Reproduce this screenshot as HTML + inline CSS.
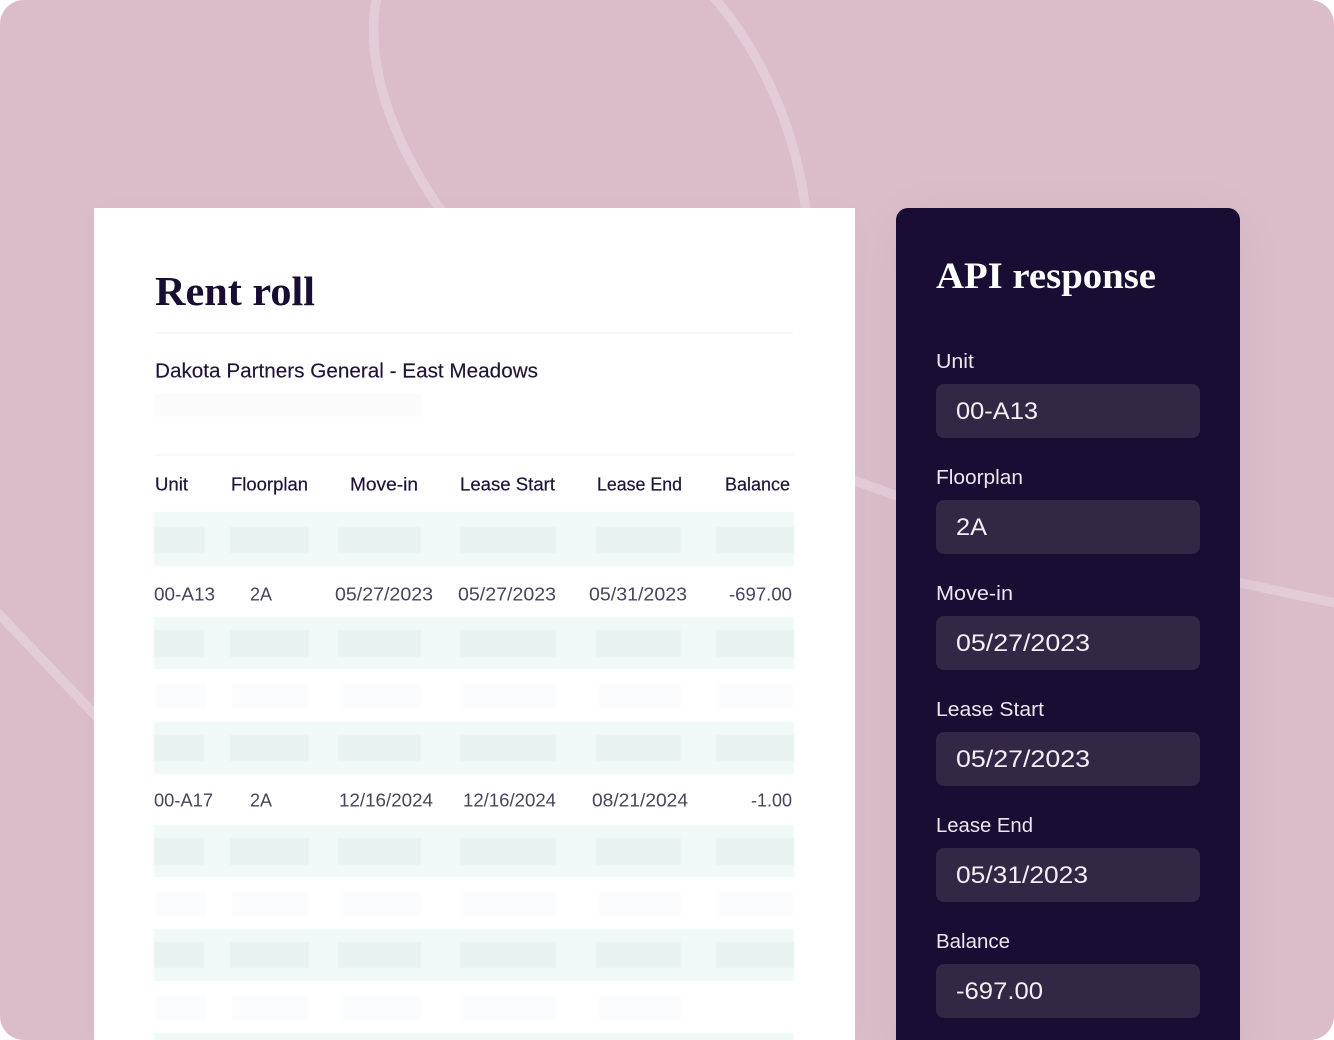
<!DOCTYPE html>
<html lang="en">
<head>
<meta charset="utf-8">
<title>Rent roll and API response</title>
<style>
html,body{margin:0;padding:0;background:#fff;}
body{width:1334px;height:1040px;overflow:hidden;position:relative;}
#bg{position:absolute;left:0;top:0;width:1334px;height:1040px;background:#dbbcc9;border-radius:24px;overflow:hidden;}
#card{position:absolute;left:94px;top:208px;width:761px;height:832px;background:#fff;box-shadow:0 0 30px rgba(60,20,60,.015);}
#panel{position:absolute;left:896px;top:208px;width:344px;height:860px;background:#1a0d33;border-radius:12px;box-shadow:0 8px 60px rgba(60,20,60,.04);}
svg{position:absolute;left:0;top:0;}
.s{font-family:"Liberation Serif",serif;font-weight:700;}
.t{font-family:"Liberation Sans",sans-serif;}
.h{font-size:18px;fill:#1f1438;stroke:#1f1438;stroke-width:.2px;}
.d{font-size:18px;fill:#4a4360;}
.l{font-size:20px;fill:#e9e7ee;}
.v{font-size:24px;fill:#f1f0f4;}
.soft{filter:blur(.9px);}
</style>
</head>
<body>
<div id="bg">
<svg width="1334" height="1040" viewBox="0 0 1334 1040" fill="none" stroke="#e3ccd8" stroke-width="9.5">
<path d="M377 -4C365 55 385 130 442 212"/>
<path d="M713 -4C755 45 795 120 806 212"/>
<path d="M-4 611L98 718"/>
<path d="M850 479L900 497"/>
<path d="M1236 582L1340 604"/>
</svg>
<div id="card"></div>
<div id="panel"></div>
<svg width="1334" height="1040" viewBox="0 0 1334 1040">
<rect x="155" y="332" width="638" height="2" fill="#f7f7f8"/>
<rect x="155" y="454" width="638" height="2" fill="#f7f7f8"/>
<rect x="155" y="394" width="266" height="23" fill="#fbfbfb" class="soft"/>

<g fill="#f0f9f7" style="filter:blur(.5px)">
<rect x="154" y="512" width="640" height="54"/>
<rect x="154" y="617" width="640" height="52"/>
<rect x="154" y="722" width="640" height="52"/>
<rect x="154" y="825" width="640" height="52"/>
<rect x="154" y="929" width="640" height="52"/>
<rect x="154" y="1033" width="640" height="12"/>
</g>
<g fill="#e8f2f0" class="soft">
<rect x="154" y="527" width="51" height="26"/><rect x="230" y="527" width="79" height="26"/><rect x="338" y="527" width="83" height="26"/><rect x="460" y="527" width="96" height="26"/><rect x="596" y="527" width="85" height="26"/><rect x="716" y="527" width="78" height="26"/>
<rect x="154" y="630" width="50" height="27"/><rect x="230" y="630" width="79" height="27"/><rect x="338" y="630" width="83" height="27"/><rect x="460" y="630" width="96" height="27"/><rect x="596" y="630" width="85" height="27"/><rect x="716" y="630" width="78" height="27"/>
<rect x="154" y="735" width="50" height="26"/><rect x="230" y="735" width="79" height="26"/><rect x="338" y="735" width="83" height="26"/><rect x="460" y="735" width="96" height="26"/><rect x="596" y="735" width="85" height="26"/><rect x="716" y="735" width="78" height="26"/>
<rect x="154" y="838" width="50" height="27"/><rect x="230" y="838" width="79" height="27"/><rect x="338" y="838" width="83" height="27"/><rect x="460" y="838" width="96" height="27"/><rect x="596" y="838" width="85" height="27"/><rect x="716" y="838" width="78" height="27"/>
<rect x="154" y="942" width="50" height="26"/><rect x="230" y="942" width="79" height="26"/><rect x="338" y="942" width="83" height="26"/><rect x="460" y="942" width="96" height="26"/><rect x="596" y="942" width="85" height="26"/><rect x="716" y="942" width="78" height="26"/>
</g>
<g fill="#fbfcfd" class="soft">
<rect x="156" y="684" width="50" height="24"/><rect x="232" y="684" width="76" height="24"/><rect x="341" y="684" width="80" height="24"/><rect x="462" y="684" width="94" height="24"/><rect x="599" y="684" width="82" height="24"/><rect x="717" y="684" width="76" height="24"/>
<rect x="156" y="892" width="50" height="24"/><rect x="232" y="892" width="76" height="24"/><rect x="341" y="892" width="80" height="24"/><rect x="462" y="892" width="94" height="24"/><rect x="599" y="892" width="82" height="24"/><rect x="717" y="892" width="76" height="24"/>
<rect x="156" y="996" width="50" height="24"/><rect x="232" y="996" width="76" height="24"/><rect x="341" y="996" width="80" height="24"/><rect x="462" y="996" width="94" height="24"/><rect x="599" y="996" width="82" height="24"/>
</g>

<text class="s" x="155" y="305" font-size="41" fill="#1a0d33" textLength="160" lengthAdjust="spacingAndGlyphs">Rent roll</text>
<text class="t" x="155" y="377.5" font-size="20" fill="#1f1438" stroke="#1f1438" stroke-width=".15" textLength="383" lengthAdjust="spacingAndGlyphs">Dakota Partners General - East Meadows</text>

<text class="t h" x="155" y="490.5" textLength="33" lengthAdjust="spacingAndGlyphs">Unit</text>
<text class="t h" x="231" y="490.5" textLength="77" lengthAdjust="spacingAndGlyphs">Floorplan</text>
<text class="t h" x="350" y="490.5" textLength="68" lengthAdjust="spacingAndGlyphs">Move-in</text>
<text class="t h" x="460" y="490.5" textLength="95" lengthAdjust="spacingAndGlyphs">Lease Start</text>
<text class="t h" x="597" y="490.5" textLength="85" lengthAdjust="spacingAndGlyphs">Lease End</text>
<text class="t h" x="725" y="490.5" textLength="65" lengthAdjust="spacingAndGlyphs">Balance</text>

<text class="t d" x="154" y="600.5" textLength="61" lengthAdjust="spacingAndGlyphs">00-A13</text>
<text class="t d" x="250" y="600.5" textLength="22" lengthAdjust="spacingAndGlyphs">2A</text>
<text class="t d" x="335" y="600.5" textLength="98" lengthAdjust="spacingAndGlyphs">05/27/2023</text>
<text class="t d" x="458" y="600.5" textLength="98" lengthAdjust="spacingAndGlyphs">05/27/2023</text>
<text class="t d" x="589" y="600.5" textLength="98" lengthAdjust="spacingAndGlyphs">05/31/2023</text>
<text class="t d" x="729" y="600.5" textLength="63" lengthAdjust="spacingAndGlyphs">-697.00</text>

<text class="t d" x="154" y="806.5" textLength="59" lengthAdjust="spacingAndGlyphs">00-A17</text>
<text class="t d" x="250" y="806.5" textLength="22" lengthAdjust="spacingAndGlyphs">2A</text>
<text class="t d" x="339" y="806.5" textLength="94" lengthAdjust="spacingAndGlyphs">12/16/2024</text>
<text class="t d" x="463" y="806.5" textLength="93" lengthAdjust="spacingAndGlyphs">12/16/2024</text>
<text class="t d" x="592" y="806.5" textLength="96" lengthAdjust="spacingAndGlyphs">08/21/2024</text>
<text class="t d" x="751" y="806.5" textLength="41" lengthAdjust="spacingAndGlyphs">-1.00</text>

<text class="s" x="936" y="288" font-size="37" fill="#ffffff" textLength="220" lengthAdjust="spacingAndGlyphs">API response</text>

<g fill="#322845">
<rect x="936" y="384" width="264" height="54" rx="8"/>
<rect x="936" y="500" width="264" height="54" rx="8"/>
<rect x="936" y="616" width="264" height="54" rx="8"/>
<rect x="936" y="732" width="264" height="54" rx="8"/>
<rect x="936" y="848" width="264" height="54" rx="8"/>
<rect x="936" y="964" width="264" height="54" rx="8"/>
</g>

<text class="t l" x="936" y="368" textLength="38" lengthAdjust="spacingAndGlyphs">Unit</text>
<text class="t l" x="936" y="484" textLength="87" lengthAdjust="spacingAndGlyphs">Floorplan</text>
<text class="t l" x="936" y="600" textLength="77" lengthAdjust="spacingAndGlyphs">Move-in</text>
<text class="t l" x="936" y="716" textLength="108" lengthAdjust="spacingAndGlyphs">Lease Start</text>
<text class="t l" x="936" y="832" textLength="97" lengthAdjust="spacingAndGlyphs">Lease End</text>
<text class="t l" x="936" y="948" textLength="74" lengthAdjust="spacingAndGlyphs">Balance</text>

<text class="t v" x="956" y="419" textLength="82" lengthAdjust="spacingAndGlyphs">00-A13</text>
<text class="t v" x="956" y="535" textLength="31" lengthAdjust="spacingAndGlyphs">2A</text>
<text class="t v" x="956" y="651" textLength="134" lengthAdjust="spacingAndGlyphs">05/27/2023</text>
<text class="t v" x="956" y="767" textLength="134" lengthAdjust="spacingAndGlyphs">05/27/2023</text>
<text class="t v" x="956" y="883" textLength="132" lengthAdjust="spacingAndGlyphs">05/31/2023</text>
<text class="t v" x="956" y="999" textLength="87" lengthAdjust="spacingAndGlyphs">-697.00</text>
</svg>
</div>
</body>
</html>
